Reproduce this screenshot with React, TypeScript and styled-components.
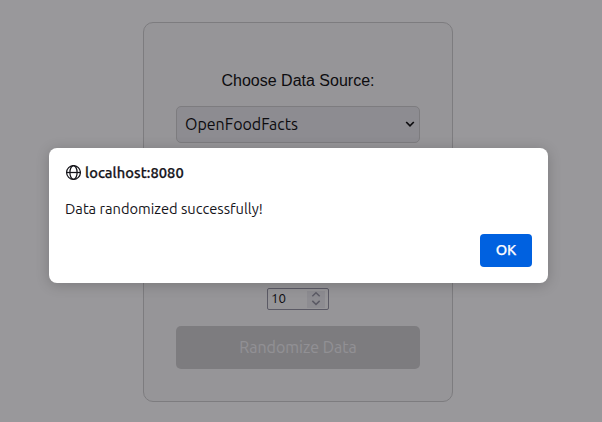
import React from "react";
import styled, { createGlobalStyle } from "styled-components";

const uiFont = 'Ubuntu, "Noto Sans", sans-serif';

const GlobalStyle = createGlobalStyle`
  * { box-sizing: border-box; }
  body { margin: 0; background: #fff; overflow: hidden; }
`;

const Page = styled.main`
  position: relative;
  width: 100%;
  height: 422px;
  padding: 22px 149px 0 143px;
  overflow: hidden;
`;

const Card = styled.section`
  height: 380px;
  width: 310px;
  padding: 48px 32px 32px;
  border: 1px solid #ccc;
  border-radius: 10px;
  background: #f9f9f9;
  display: flex;
  flex-direction: column;
  align-items: center;
`;

const Label = styled.label`
  font: 16px/20px "Liberation Sans", Arial, sans-serif;
  color: #000;
`;

const SelectBox = styled.button`
  display: flex;
  align-items: center;
  justify-content: space-between;
  width: 100%;
  height: 37px;
  margin-top: 15px;
  padding: 0 4px 2px 8px;
  border: 1px solid #ccc;
  border-radius: 5px;
  background: #e9e9ed;
  color: #000;
  font: 16px/22px ${uiFont};
`;

const NumberField = styled.div`
  display: flex;
  align-items: center;
  justify-content: space-between;
  width: 62px;
  height: 22px;
  margin-top: auto;
  padding: 0 3px;
  border: 1px solid #8f8f9d;
  border-radius: 2px;
  background: #f9f9f9;
  color: #000;
  font: 13.333px/18px ${uiFont};
`;

const Spinner = styled.span`
  display: flex;
  width: 18px;
  height: 17px;
  align-items: center;
  justify-content: center;
  background: #e9e9ed;
`;

const RandomizeButton = styled.button`
  width: 100%;
  height: 43px;
  flex: none;
  margin-top: 16px;
  padding: 0 0 2px;
  border: 0;
  border-radius: 5px;
  background: #ccc;
  color: #f1f1f3;
  font: 16px/22px ${uiFont};
`;

const Overlay = styled.div`
  position: absolute;
  inset: 0;
  background: rgba(28, 27, 34, 0.45);
  padding: 148px 54px 0 49px;
`;

const Dialog = styled.div`
  width: 499px;
  height: 135px;
  padding: 16px;
  border-radius: 8px;
  background: #fff;
  box-shadow: 0 2px 14px rgba(0, 0, 0, 0.2);
  color: #15141a;
  display: flex;
  flex-direction: column;
`;

const Origin = styled.div`
  display: flex;
  align-items: center;
  gap: 4px;
  height: 18px;
  font: 500 14.667px/18px ${uiFont};
  letter-spacing: 0.06px;
  -webkit-text-stroke: 0.25px currentColor;
`;

const Message = styled.p`
  margin: 18px 0 0;
  font: 14.667px/18px ${uiFont};
  white-space: nowrap;
`;

const OkButton = styled.button`
  width: 52px;
  height: 33px;
  margin: auto 0 0 auto;
  padding: 0 0 1px;
  border: 0;
  border-radius: 4px;
  background: #0061e0;
  color: #fbfbfe;
  font: 500 14.667px/18px ${uiFont};
  -webkit-text-stroke: 0.25px currentColor;
`;

const Globe = () => (
  <svg width="16" height="16" viewBox="0 0 16 16" fill="none" stroke="#15141a" strokeWidth="1.25">
    <circle cx="8.5" cy="7.5" r="6.9" />
    <ellipse cx="8.5" cy="7.5" rx="3.6" ry="6.9" />
    <path d="M1.6 7.5h13.8" />
  </svg>
);

const Chevron = () => (
  <svg width="10" height="8" viewBox="0 0 10 8" fill="none" stroke="#000" strokeWidth="1.7">
    <path d="M1.2 2L5 5.8 8.8 2" />
  </svg>
);

const SpinArrows = () => (
  <svg width="10" height="16" viewBox="0 0 10 16" fill="none" stroke="#8f8f9d" strokeWidth="1.5">
    <path d="M1.3 5.3L5 1.8l3.7 3.5M1.3 9.9L5 13.4l3.7-3.5" />
  </svg>
);

export default function App() {
  return (
    <>
      <GlobalStyle />
      <Page>
        <Card>
          <Label>Choose Data Source:</Label>
          <SelectBox>
            OpenFoodFacts
            <Chevron />
          </SelectBox>
          <NumberField>
            10
            <Spinner>
              <SpinArrows />
            </Spinner>
          </NumberField>
          <RandomizeButton disabled>Randomize Data</RandomizeButton>
        </Card>
        <Overlay>
          <Dialog role="alertdialog">
            <Origin>
              <Globe />
              <span>localhost:8080</span>
            </Origin>
            <Message>Data randomized successfully!</Message>
            <OkButton>OK</OkButton>
          </Dialog>
        </Overlay>
      </Page>
    </>
  );
}
